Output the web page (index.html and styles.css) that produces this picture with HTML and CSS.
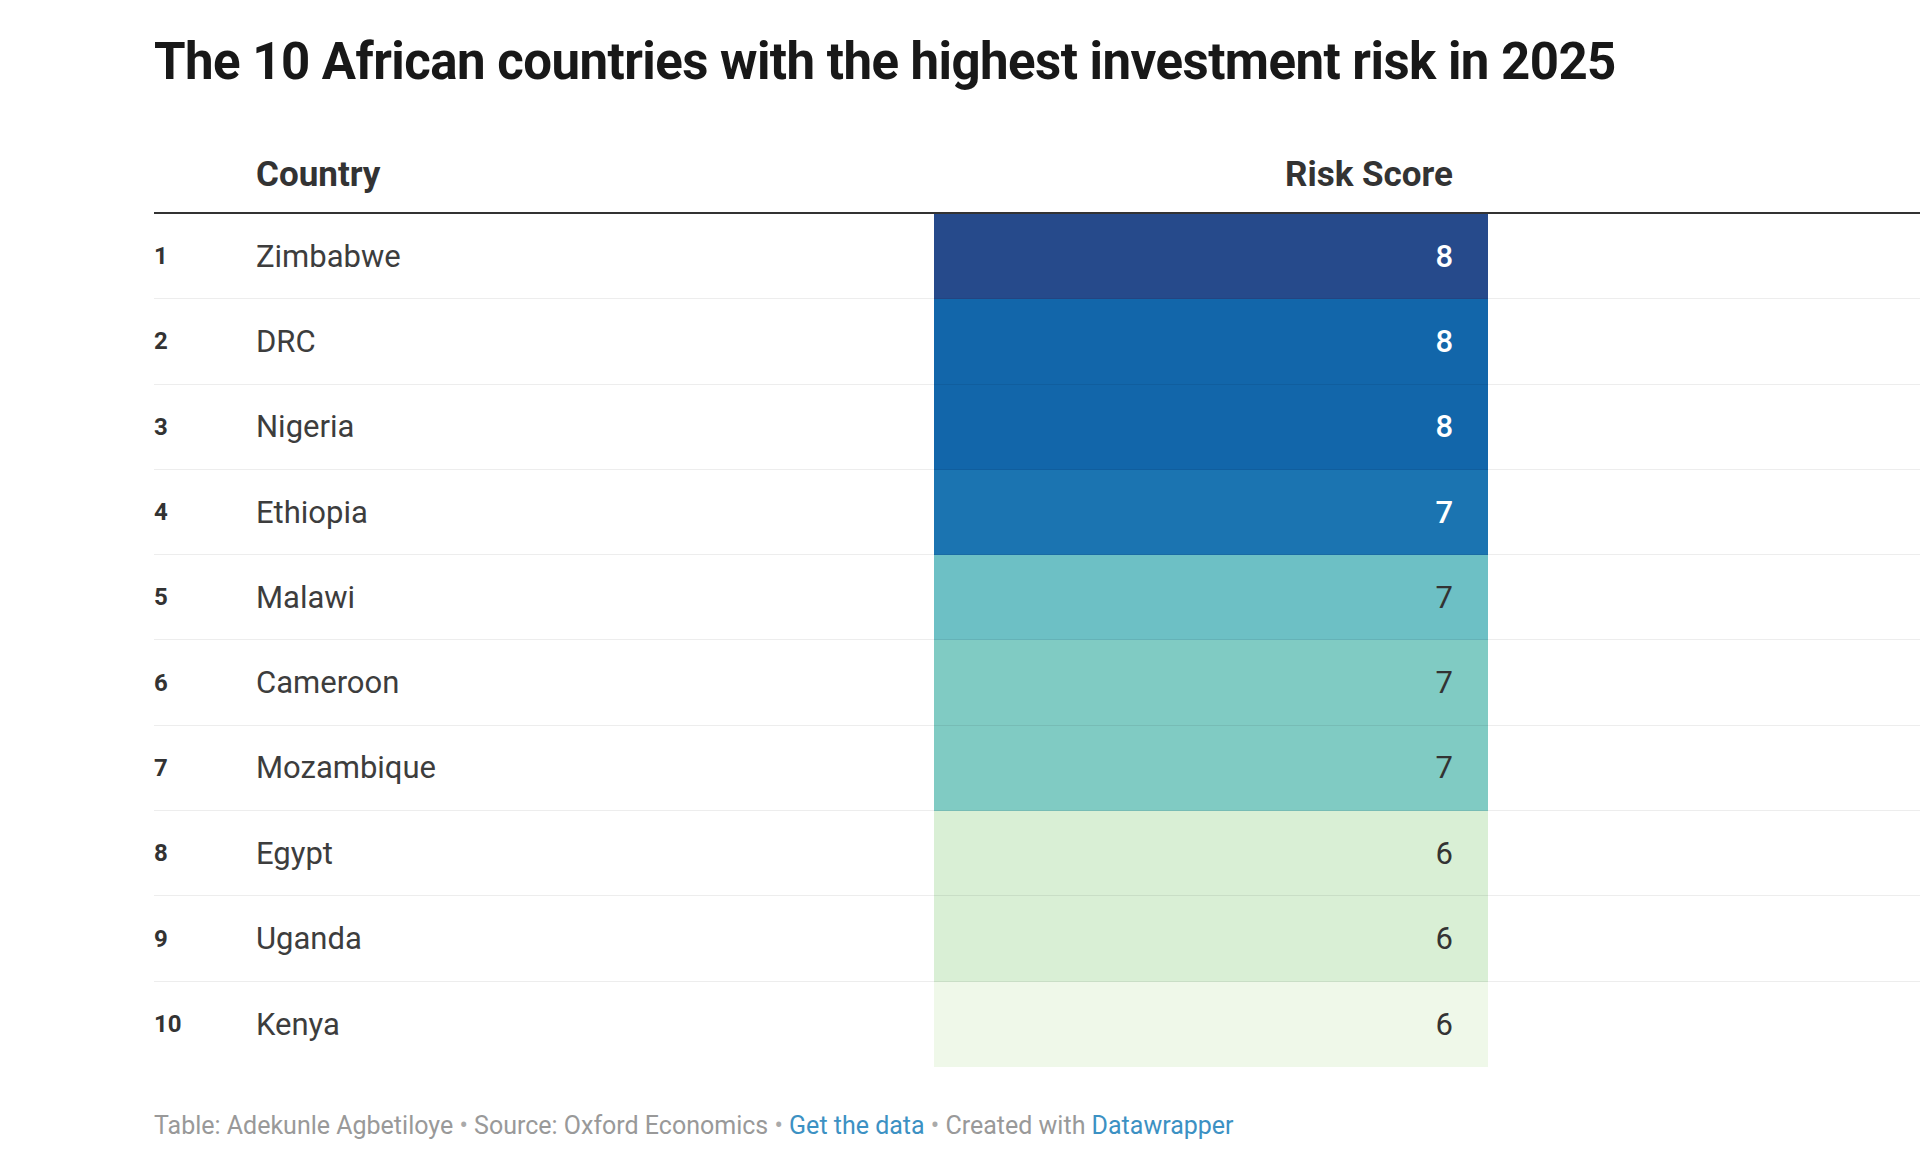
FILE: index.html
```html
<!DOCTYPE html>
<html lang="en">
<head>
<meta charset="utf-8">
<title>The 10 African countries with the highest investment risk in 2025</title>
<link rel="stylesheet" href="styles.css">
</head>
<body>
<main class="chart">
  <h1 class="title">The 10 African countries with the highest investment risk in 2025</h1>
  <div class="table">
    <div class="row head">
      <div class="cell rank"></div>
      <div class="cell country">Country</div>
      <div class="cell score">Risk Score</div>
      <div class="cell fill"></div>
    </div>
    <div class="row">
      <div class="cell rank">1</div>
      <div class="cell country">Zimbabwe</div>
      <div class="cell score c1 dark">8</div>
      <div class="cell fill"></div>
    </div>
    <div class="row">
      <div class="cell rank">2</div>
      <div class="cell country">DRC</div>
      <div class="cell score c2 dark">8</div>
      <div class="cell fill"></div>
    </div>
    <div class="row">
      <div class="cell rank">3</div>
      <div class="cell country">Nigeria</div>
      <div class="cell score c2 dark">8</div>
      <div class="cell fill"></div>
    </div>
    <div class="row">
      <div class="cell rank">4</div>
      <div class="cell country">Ethiopia</div>
      <div class="cell score c3 dark">7</div>
      <div class="cell fill"></div>
    </div>
    <div class="row">
      <div class="cell rank">5</div>
      <div class="cell country">Malawi</div>
      <div class="cell score c4">7</div>
      <div class="cell fill"></div>
    </div>
    <div class="row">
      <div class="cell rank">6</div>
      <div class="cell country">Cameroon</div>
      <div class="cell score c5">7</div>
      <div class="cell fill"></div>
    </div>
    <div class="row">
      <div class="cell rank">7</div>
      <div class="cell country">Mozambique</div>
      <div class="cell score c5">7</div>
      <div class="cell fill"></div>
    </div>
    <div class="row">
      <div class="cell rank">8</div>
      <div class="cell country">Egypt</div>
      <div class="cell score c6">6</div>
      <div class="cell fill"></div>
    </div>
    <div class="row">
      <div class="cell rank">9</div>
      <div class="cell country">Uganda</div>
      <div class="cell score c6">6</div>
      <div class="cell fill"></div>
    </div>
    <div class="row last">
      <div class="cell rank">10</div>
      <div class="cell country">Kenya</div>
      <div class="cell score c7">6</div>
      <div class="cell fill"></div>
    </div>
  </div>
  <p class="footer">Table: Adekunle Agbetiloye <span class="dot">•</span> Source: Oxford Economics <span class="dot">•</span> <a class="link" href="#">Get the data</a> <span class="dot">•</span> Created with <a class="link" href="#">Datawrapper</a></p>
</main>
</body>
</html>
```

FILE: styles.css
```css
html, body {
  margin: 0;
  padding: 0;
  background: #ffffff;
}

body {
  font-family: Roboto, "Liberation Sans", Arial, sans-serif;
  color: #333333;
}

.chart {
  padding: 31px 0 0 154px;
}

.title {
  margin: 0;
  font-size: 51px;
  line-height: 62px;
  letter-spacing: -0.55px;
  font-weight: 700;
  color: #181818;
  white-space: nowrap;
}

.table {
  margin-top: 61px;
}

.row {
  display: grid;
  grid-template-columns: 102px 678px 554px 1fr;
  height: 85.3px;
}

.cell {
  display: flex;
  align-items: center;
  box-sizing: border-box;
  border-bottom: 1px solid rgba(0, 0, 0, 0.07);
}

.row.last .cell {
  border-bottom: none;
}

.row.head {
  height: auto;
}

.row.head .cell {
  align-items: flex-end;
  font-size: 35px;
  line-height: 42px;
  font-weight: 700;
  color: #333333;
  padding-bottom: 16px;
  border-bottom: 2px solid #333333;
}

.rank {
  font-size: 24px;
  font-weight: 700;
  color: #333333;
}

.country {
  font-size: 31px;
  color: #3d3d3d;
}

.score {
  justify-content: flex-end;
  padding-right: 35px;
  font-size: 31px;
  color: #333333;
}

.score.dark {
  color: #ffffff;
  font-weight: 500;
}

.c1 { background: #264a8b; }
.c2 { background: #1266aa; }
.c3 { background: #1b74b1; }
.c4 { background: #6dc0c5; }
.c5 { background: #80cbc3; }
.c6 { background: #d9efd5; }
.c7 { background: #eff8e9; }

.footer {
  margin: 44px 0 0 0;
  font-size: 25px;
  line-height: 30px;
  color: #999999;
  white-space: nowrap;
}

.dot {
  color: #aaaaaa;
}

.link {
  color: #3c91c3;
  text-decoration: none;
}
```
